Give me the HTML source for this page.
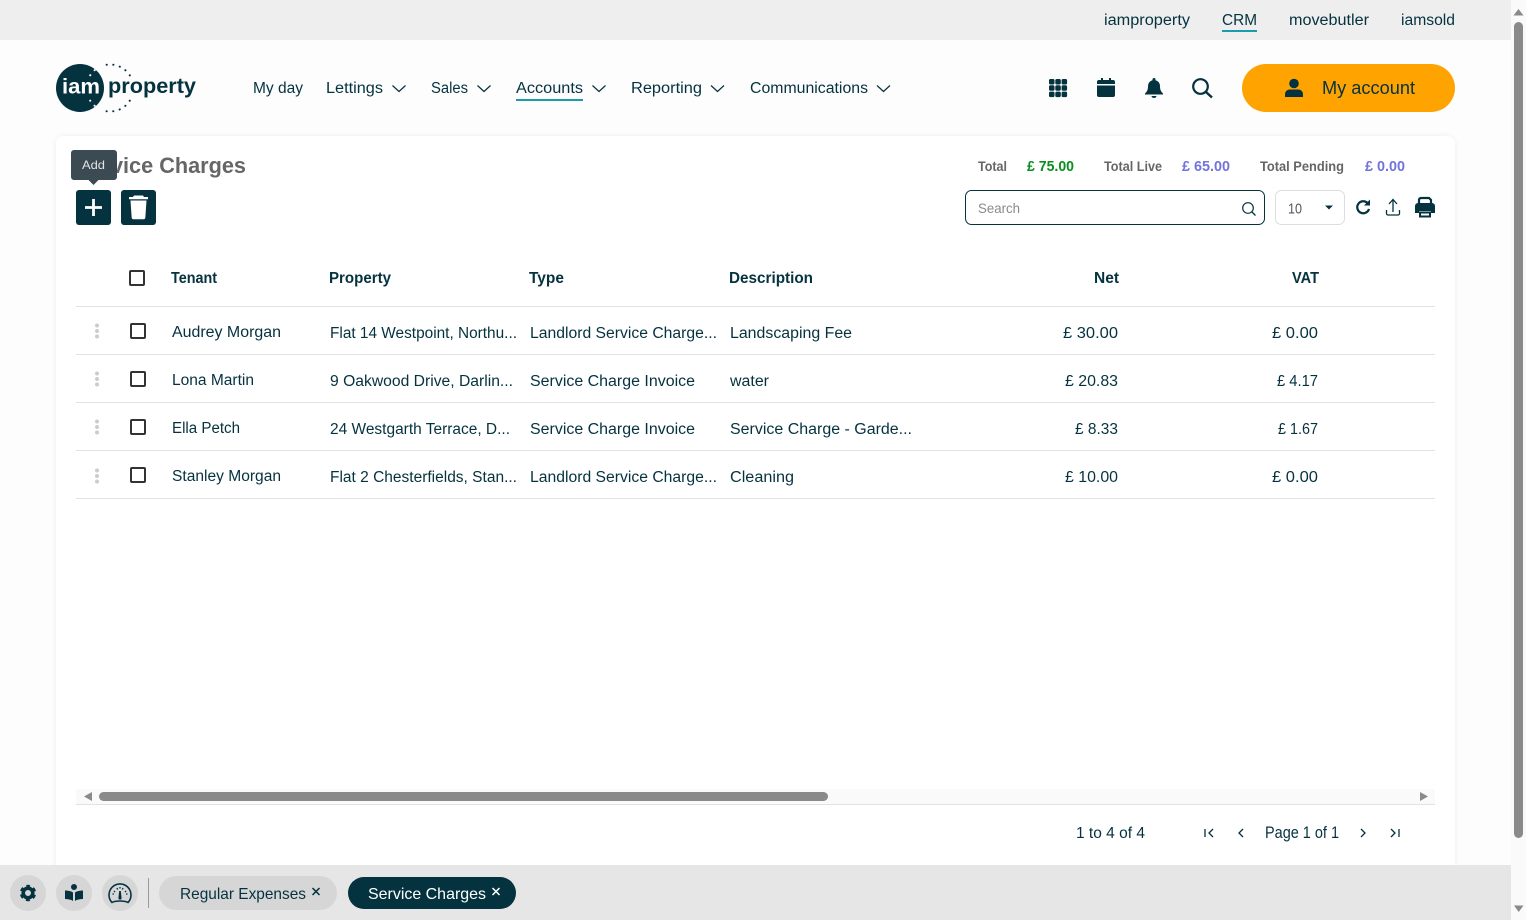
<!DOCTYPE html>
<html><head><meta charset="utf-8"><title>Service Charges</title>
<style>
html,body{margin:0;padding:0;width:1526px;height:920px;overflow:hidden;background:#fdfdfd}
svg{display:block;position:absolute;left:0;top:0}
text{font-family:"Liberation Sans",sans-serif;fill:#05323f;font-size:15.5px}
.b{font-weight:700}
.g{fill:#666;font-weight:700;font-size:13.5px}
.ck{fill:#fff;stroke:#333;stroke-width:2}
.chev{fill:none;stroke:#05323f;stroke-width:1.2}
.ln{stroke:#e2e2e2;stroke-width:1}
.dot{fill:#ccc}
</style></head><body>
<svg width="1526" height="920" viewBox="0 0 1526 920" xmlns="http://www.w3.org/2000/svg">
<defs>
<filter id="s" x="-2%" y="-2%" width="104%" height="104%"><feDropShadow dx="0" dy="0" stdDeviation="3" flood-color="#000" flood-opacity="0.06"/></filter>
<clipPath id="lc"><path d="M56 60h48v18H56zM56 97h48v18H56z"/></clipPath>
<clipPath id="lo"><path d="M104 60h34v19h-34zM104 98h34v18h-34z"/></clipPath>
</defs>
<!-- top bar -->
<rect x="0" y="0" width="1511" height="40" fill="#eeeeee"/>
<text x="1104" y="25" textLength="86" lengthAdjust="spacingAndGlyphs">iamproperty</text>
<text x="1222" y="25" textLength="35" lengthAdjust="spacingAndGlyphs">CRM</text>
<rect x="1222" y="30" width="35" height="2" fill="#1a9cb0"/>
<text x="1289" y="25" textLength="80" lengthAdjust="spacingAndGlyphs">movebutler</text>
<text x="1401" y="25" textLength="54" lengthAdjust="spacingAndGlyphs">iamsold</text>
<!-- logo -->
<circle cx="110" cy="88" r="23.5" fill="none" stroke="#05323f" stroke-width="2" stroke-linecap="round" stroke-dasharray="0.1 6.6" clip-path="url(#lo)"/>
<circle cx="80" cy="88" r="24" fill="#05323f"/>
<circle cx="110" cy="88" r="23.5" fill="none" stroke="#fff" stroke-width="2" stroke-linecap="round" stroke-dasharray="0.1 6.6" clip-path="url(#lc)"/>
<text x="62" y="93.500" textLength="38" lengthAdjust="spacingAndGlyphs" class="b" style="fill:#fff;font-size:21px">iam</text>
<text x="108" y="93" textLength="88" lengthAdjust="spacingAndGlyphs" class="b" style="font-size:21px">property</text>
<!-- nav -->
<text x="253" y="93" textLength="50" lengthAdjust="spacingAndGlyphs">My day</text>
<text x="326" y="93" textLength="57" lengthAdjust="spacingAndGlyphs">Lettings</text>
<path class="chev" d="M392.500 85.500l6.500 6 6.500-6"/>
<text x="431" y="93" textLength="37" lengthAdjust="spacingAndGlyphs">Sales</text>
<path class="chev" d="M477.500 85.500l6.500 6 6.500-6"/>
<text x="516" y="93" textLength="67" lengthAdjust="spacingAndGlyphs">Accounts</text>
<rect x="516" y="99" width="67" height="2" fill="#1a9cb0"/>
<path class="chev" d="M592.500 85.500l6.500 6 6.500-6"/>
<text x="631" y="93" textLength="71" lengthAdjust="spacingAndGlyphs">Reporting</text>
<path class="chev" d="M711 85.500l6.500 6 6.500-6"/>
<text x="750" y="93" textLength="118" lengthAdjust="spacingAndGlyphs">Communications</text>
<path class="chev" d="M877 85.500l6.500 6 6.500-6"/>
<!-- header icons -->
<g fill="#05323f">
<rect x="1049" y="79" width="5.500" height="5.500" rx="1.500"/><rect x="1055.300" y="79" width="5.500" height="5.500" rx="1.500"/><rect x="1061.600" y="79" width="5.500" height="5.500" rx="1.500"/>
<rect x="1049" y="85.300" width="5.500" height="5.500" rx="1.500"/><rect x="1055.300" y="85.300" width="5.500" height="5.500" rx="1.500"/><rect x="1061.600" y="85.300" width="5.500" height="5.500" rx="1.500"/>
<rect x="1049" y="91.600" width="5.500" height="5.500" rx="1.500"/><rect x="1055.300" y="91.600" width="5.500" height="5.500" rx="1.500"/><rect x="1061.600" y="91.600" width="5.500" height="5.500" rx="1.500"/>
<path d="M1097 84v-2a2 2 0 0 1 2-2h2v-2h2v2h6v-2h2v2h2a2 2 0 0 1 2 2v2z"/>
<path d="M1097 85.500h18V95a2 2 0 0 1-2 2h-14a2 2 0 0 1-2-2z"/>
<path d="M1154 78a1.500 1.500 0 0 1 1.500 1.500v.8c3 .7 4.500 3.200 4.500 6 0 3.700 1 5.200 3 7.200v1h-18v-1c2-2 3-3.500 3-7.200 0-2.800 1.500-5.300 4.500-6v-.8A1.500 1.500 0 0 1 1154 78z"/>
<path d="M1151.500 96h5a2.500 2 0 0 1-5 0z"/>
</g>
<circle cx="1200.500" cy="86.500" r="7.300" fill="none" stroke="#05323f" stroke-width="2.200"/>
<path d="M1206 92l6 5.500" stroke="#05323f" stroke-width="2.400" fill="none"/>
<!-- account -->
<rect x="1242" y="64" width="213" height="48" rx="24" fill="#ffa300"/>
<circle cx="1294" cy="83.500" r="4.800" fill="#05323f"/>
<path d="M1285 97v-2.500c0-3.500 2.500-5 5-5h8c2.500 0 5 1.500 5 5V97z" fill="#05323f"/>
<text x="1322" y="94" textLength="93" lengthAdjust="spacingAndGlyphs" style="font-size:18px">My account</text>
<!-- card -->
<rect x="56" y="136" width="1399" height="740" rx="8" fill="#fff" filter="url(#s)"/>
<text x="76" y="173" textLength="170" lengthAdjust="spacingAndGlyphs" class="b" style="fill:#666;font-size:22.5px">Service Charges</text>
<!-- tooltip -->
<rect x="71" y="150" width="46" height="30" rx="3" fill="#3c4a54"/>
<path d="M88.500 180h10l-5 5z" fill="#3c4a54"/>
<text x="82" y="169" textLength="23" lengthAdjust="spacingAndGlyphs" style="fill:#e4e4e4;font-size:12px">Add</text>
<!-- action buttons -->
<rect x="76" y="190" width="35" height="35" rx="3" fill="#05323f"/>
<path d="M93.500 199v17M85 207.500h17" stroke="#fff" stroke-width="2.800" fill="none"/>
<rect x="121" y="190" width="35" height="35" rx="3" fill="#05323f"/>
<path d="M129 197h4l1-1.500h9l1 1.500h4v2.200h-19z" fill="#fff"/>
<path d="M130.500 200.500h16l-1.200 17.500a1.500 1.500 0 0 1-1.500 1.200h-10.600a1.500 1.500 0 0 1-1.500-1.200z" fill="#fff"/>
<!-- totals -->
<text x="978" y="171" textLength="29" lengthAdjust="spacingAndGlyphs" class="g">Total</text>
<text x="1027" y="171" textLength="47" lengthAdjust="spacingAndGlyphs" class="b" style="fill:#0a8f1f;font-size:14.5px">£ 75.00</text>
<text x="1104" y="171" textLength="58" lengthAdjust="spacingAndGlyphs" class="g">Total Live</text>
<text x="1182" y="171" textLength="48" lengthAdjust="spacingAndGlyphs" class="b" style="fill:#7373dc;font-size:14.5px">£ 65.00</text>
<text x="1260" y="171" textLength="84" lengthAdjust="spacingAndGlyphs" class="g">Total Pending</text>
<text x="1365" y="171" textLength="40" lengthAdjust="spacingAndGlyphs" class="b" style="fill:#7373dc;font-size:14.5px">£ 0.00</text>
<!-- search -->
<rect x="965.500" y="190.500" width="299" height="34" rx="6" fill="#fff" stroke="#05323f"/>
<text x="978" y="213" textLength="42" lengthAdjust="spacingAndGlyphs" style="fill:#8a8a8a;font-size:14px">Search</text>
<circle cx="1248" cy="208" r="5.300" fill="none" stroke="#05323f" stroke-width="1.200"/>
<path d="M1252 212l3.500 3.500" stroke="#05323f" stroke-width="1.300"/>
<rect x="1275.500" y="190.500" width="69" height="34" rx="6" fill="#fff" stroke="#ddd"/>
<text x="1288" y="213.500" textLength="14" lengthAdjust="spacingAndGlyphs" style="fill:#556;font-size:15px">10</text>
<path d="M1325 205.500h8l-4 4z" fill="#05323f"/>
<!-- refresh, upload, print -->
<path d="M1367.500 203a6 6 0 1 0 1.500 6" fill="none" stroke="#05323f" stroke-width="2.200"/>
<path d="M1364 205.500h6v-6z" fill="#05323f"/>
<path d="M1393 212v-11.500M1389 204l4-4.500 4 4.500" fill="none" stroke="#05323f" stroke-width="1.300"/>
<path d="M1386.500 210v3.500a1.500 1.500 0 0 0 1.500 1.500h10a1.500 1.500 0 0 0 1.500-1.500V210" fill="none" stroke="#05323f" stroke-width="1.300"/>
<path d="M1419 205v-5a2 2 0 0 1 2-2h8l2 2v5z" fill="none" stroke="#05323f" stroke-width="2.200"/>
<path d="M1418 203h14a3 3 0 0 1 3 3v7h-4v-2h-12v2h-4v-7a3 3 0 0 1 3-3z" fill="#05323f"/>
<path d="M1420 212.500h10v4h-10z" fill="#fff" stroke="#05323f" stroke-width="2"/>
<!-- header -->
<rect class="ck" x="130" y="271" width="14" height="14" rx="1"/>
<text x="171" y="283" textLength="46" lengthAdjust="spacingAndGlyphs" class="b">Tenant</text>
<text x="329" y="283" textLength="62" lengthAdjust="spacingAndGlyphs" class="b">Property</text>
<text x="529" y="283" textLength="35" lengthAdjust="spacingAndGlyphs" class="b">Type</text>
<text x="729" y="283" textLength="84" lengthAdjust="spacingAndGlyphs" class="b">Description</text>
<text x="1094" y="283" textLength="25" lengthAdjust="spacingAndGlyphs" class="b">Net</text>
<text x="1292" y="283" textLength="27" lengthAdjust="spacingAndGlyphs" class="b">VAT</text>
<path class="ln" d="M76 306.500h1359M76 354.500h1359M76 402.500h1359M76 450.500h1359M76 498.500h1359"/>
<!-- row 1 -->
<g class="dot"><circle cx="97" cy="325.500" r="2"/><circle cx="97" cy="331" r="2"/><circle cx="97" cy="336.500" r="2"/></g>
<rect class="ck" x="131" y="324" width="14" height="14" rx="1"/>
<text x="172" y="337" textLength="109" lengthAdjust="spacingAndGlyphs">Audrey Morgan</text>
<text x="330" y="338" textLength="187" lengthAdjust="spacingAndGlyphs">Flat 14 Westpoint, Northu...</text>
<text x="530" y="338" textLength="187" lengthAdjust="spacingAndGlyphs">Landlord Service Charge...</text>
<text x="730" y="338" textLength="122" lengthAdjust="spacingAndGlyphs">Landscaping Fee</text>
<text x="1063" y="338" textLength="55" lengthAdjust="spacingAndGlyphs">£ 30.00</text>
<text x="1272" y="338" textLength="46" lengthAdjust="spacingAndGlyphs">£ 0.00</text>
<!-- row 2 -->
<g class="dot"><circle cx="97" cy="373.500" r="2"/><circle cx="97" cy="379" r="2"/><circle cx="97" cy="384.500" r="2"/></g>
<rect class="ck" x="131" y="372" width="14" height="14" rx="1"/>
<text x="172" y="385" textLength="82" lengthAdjust="spacingAndGlyphs">Lona Martin</text>
<text x="330" y="386" textLength="183" lengthAdjust="spacingAndGlyphs">9 Oakwood Drive, Darlin...</text>
<text x="530" y="386" textLength="165" lengthAdjust="spacingAndGlyphs">Service Charge Invoice</text>
<text x="730" y="386" textLength="39" lengthAdjust="spacingAndGlyphs">water</text>
<text x="1065" y="386" textLength="53" lengthAdjust="spacingAndGlyphs">£ 20.83</text>
<text x="1277" y="386" textLength="41" lengthAdjust="spacingAndGlyphs">£ 4.17</text>
<!-- row 3 -->
<g class="dot"><circle cx="97" cy="421.500" r="2"/><circle cx="97" cy="427" r="2"/><circle cx="97" cy="432.500" r="2"/></g>
<rect class="ck" x="131" y="420" width="14" height="14" rx="1"/>
<text x="172" y="433" textLength="68" lengthAdjust="spacingAndGlyphs">Ella Petch</text>
<text x="330" y="434" textLength="180" lengthAdjust="spacingAndGlyphs">24 Westgarth Terrace, D...</text>
<text x="530" y="434" textLength="165" lengthAdjust="spacingAndGlyphs">Service Charge Invoice</text>
<text x="730" y="434" textLength="182" lengthAdjust="spacingAndGlyphs">Service Charge - Garde...</text>
<text x="1075" y="434" textLength="43" lengthAdjust="spacingAndGlyphs">£ 8.33</text>
<text x="1278" y="434" textLength="40" lengthAdjust="spacingAndGlyphs">£ 1.67</text>
<!-- row 4 -->
<g class="dot"><circle cx="97" cy="470.500" r="2"/><circle cx="97" cy="476" r="2"/><circle cx="97" cy="481.500" r="2"/></g>
<rect class="ck" x="131" y="468" width="14" height="14" rx="1"/>
<text x="172" y="481" textLength="109" lengthAdjust="spacingAndGlyphs">Stanley Morgan</text>
<text x="330" y="482" textLength="187" lengthAdjust="spacingAndGlyphs">Flat 2 Chesterfields, Stan...</text>
<text x="530" y="482" textLength="187" lengthAdjust="spacingAndGlyphs">Landlord Service Charge...</text>
<text x="730" y="482" textLength="64" lengthAdjust="spacingAndGlyphs">Cleaning</text>
<text x="1065" y="482" textLength="53" lengthAdjust="spacingAndGlyphs">£ 10.00</text>
<text x="1272" y="482" textLength="46" lengthAdjust="spacingAndGlyphs">£ 0.00</text>
<!-- horizontal scrollbar -->
<rect x="76" y="789" width="1359" height="15" fill="#fafafa"/>
<rect x="99" y="792" width="729" height="9" rx="4.500" fill="#8a8a8a"/>
<path d="M92 792v9l-8-4.500z" fill="#8a8a8a"/>
<path d="M1420 792v9l8-4.500z" fill="#8a8a8a"/>
<path d="M76 804.500h1359" stroke="#e2e2e2"/>
<!-- pagination -->
<text x="1076" y="838" textLength="69" lengthAdjust="spacingAndGlyphs" style="font-size:16px">1 to 4 of 4</text>
<text x="1265" y="838" textLength="74" lengthAdjust="spacingAndGlyphs" style="font-size:17px">Page 1 of 1</text>
<g fill="none" stroke="#05323f" stroke-width="1.300">
<path d="M1205 829v8M1213 829l-4 4 4 4"/>
<path d="M1243 829l-4 4 4 4"/>
<path d="M1361 829l4 4-4 4"/>
<path d="M1391 829l4 4-4 4M1399 829v8"/>
</g>
<!-- bottom bar -->
<rect x="0" y="865" width="1511" height="55" fill="#e6e6e6"/>
<circle cx="28" cy="893" r="18" fill="#d6d6d6"/>
<circle cx="74" cy="893" r="18" fill="#d6d6d6"/>
<circle cx="120" cy="893" r="18" fill="#d6d6d6"/>
<g fill="#05323f">
<circle cx="28" cy="893" r="4.800" fill="none" stroke="#05323f" stroke-width="3.600"/>
<circle cx="28" cy="893" r="7" fill="none" stroke="#05323f" stroke-width="2.400" stroke-dasharray="3.800 3.530" stroke-dashoffset="1.900" transform="rotate(-90 28 893)"/>
<circle cx="74" cy="887" r="3"/>
<path d="M65 890.500c3 0 6 .5 8 2v8.500c-2-1.500-5-2-8-2zM83 890.500c-3 0-6 .5-8 2v8.500c2-1.500 5-2 8-2z"/>
</g>
<path d="M112 902.500a11 11 0 1 1 16 0c-2.500-1.500-5-1.500-8-1.500s-5.500 0-8 1.500z" fill="none" stroke="#05323f" stroke-width="1.600"/>
<path d="M114 891l1 1M117 888l.6 1.500M120 887v1.500M123 888l-.6 1.500M126 891l-1 1M112.500 894h1.500M126 894h1.500" stroke="#05323f" stroke-width="1.300" fill="none"/>
<path d="M119.200 891h1.600l.8 7a1.600 1.600 0 1 1-3.200 0z" fill="#05323f"/>
<path d="M148.500 878v30" stroke="#9a9a9a"/>
<rect x="159" y="876" width="178" height="34" rx="17" fill="#d6d6d6"/>
<text x="180" y="899" textLength="126" lengthAdjust="spacingAndGlyphs" style="font-size:16px">Regular Expenses</text>
<path d="M312.500 888l7 7M319.500 888l-7 7" stroke="#05323f" stroke-width="1.500"/>
<rect x="348" y="877" width="168" height="32" rx="16" fill="#05323f"/>
<text x="368" y="899" textLength="118" lengthAdjust="spacingAndGlyphs" style="fill:#fff;font-size:16px">Service Charges</text>
<path d="M492.500 888l7 7M499.500 888l-7 7" stroke="#fff" stroke-width="1.500"/>
<!-- page scrollbar -->
<rect x="1511" y="0" width="15" height="920" fill="#fafafa"/>
<rect x="1514" y="22" width="9" height="816" rx="4.500" fill="#8a8a8a"/>
<path d="M1518.500 9l5 6.500h-10z" fill="#8a8a8a"/>
<path d="M1514 905.500h9.500l-4.800 6.500z" fill="#8a8a8a"/>
</svg>
</body></html>
